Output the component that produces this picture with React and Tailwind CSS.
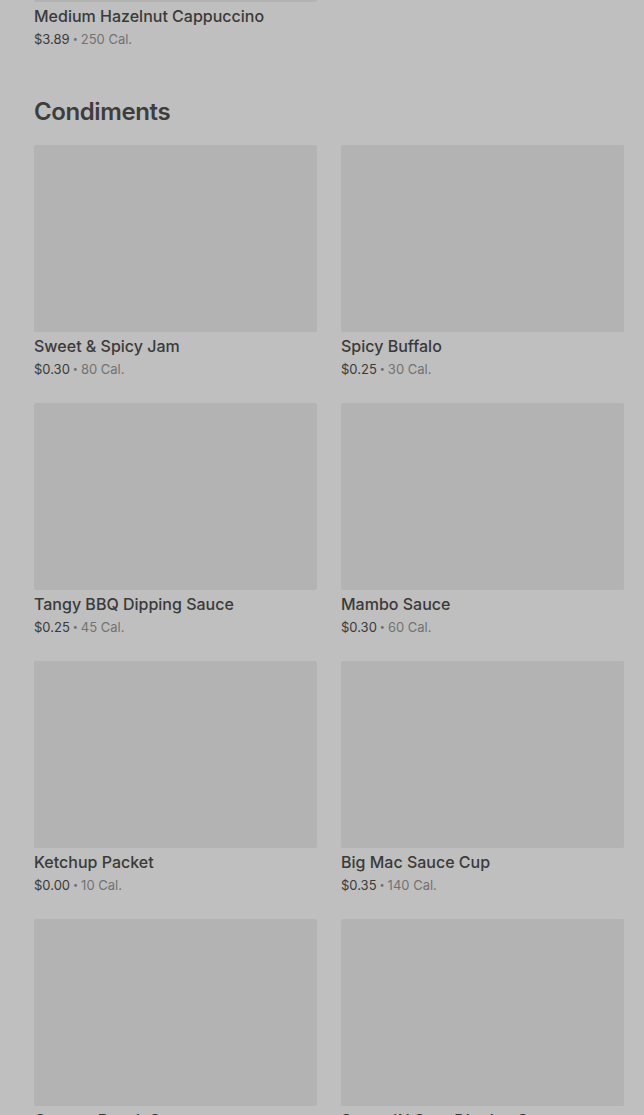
import React from 'react';

const condiments = [
  { name: 'Sweet & Spicy Jam', price: '$0.30', cal: '80 Cal.' },
  { name: 'Spicy Buffalo', price: '$0.25', cal: '30 Cal.' },
  { name: 'Tangy BBQ Dipping Sauce', price: '$0.25', cal: '45 Cal.' },
  { name: 'Mambo Sauce', price: '$0.30', cal: '60 Cal.' },
  { name: 'Ketchup Packet', price: '$0.00', cal: '10 Cal.' },
  { name: 'Big Mac Sauce Cup', price: '$0.35', cal: '140 Cal.' },
  { name: 'Creamy Ranch Sauce', price: '$0.30', cal: '110 Cal.' },
  { name: "Sweet 'N Sour Dipping Sauce", price: '$0.25', cal: '50 Cal.' },
];

function ItemText({ name, price, cal }) {
  return (
    <div>
      <p className="mt-1 text-[16px] leading-5 font-medium text-[#3a3a3a]">{name}</p>
      <p className="mt-[3px] flex items-center text-[13px] leading-5 text-[#3a3a3a]">
        <span>{price}</span>
        <span className="mx-[3px] text-[9px] text-[#6e6e6e]">•</span>
        <span className="text-[#727272]">{cal}</span>
      </p>
    </div>
  );
}

function Card({ item }) {
  return (
    <div>
      <div className="h-[187px] bg-[#b3b3b3] rounded-[2px]" />
      <ItemText {...item} />
    </div>
  );
}

export default function App() {
  return (
    <div
      className="min-h-screen bg-[#bfbfbf] pl-[34px] pr-[20px] overflow-hidden"
      style={{ fontFamily: 'Inter, "Noto Sans", sans-serif' }}
    >
      <div className="grid grid-cols-2 gap-x-6">
        <div>
          <div className="h-[2px] bg-[#b3b3b3] rounded-b-[2px]" />
          <ItemText name="Medium Hazelnut Cappuccino" price="$3.89" cal="250 Cal." />
        </div>
      </div>

      <h2 className="mt-[47px] text-[24px] leading-8 font-semibold text-[#3d3d3d] tracking-[-0.4px]">
        Condiments
      </h2>

      <div className="mt-[17px] grid grid-cols-2 gap-x-6 gap-y-6">
        {condiments.map((item) => (
          <Card key={item.name} item={item} />
        ))}
      </div>
    </div>
  );
}
